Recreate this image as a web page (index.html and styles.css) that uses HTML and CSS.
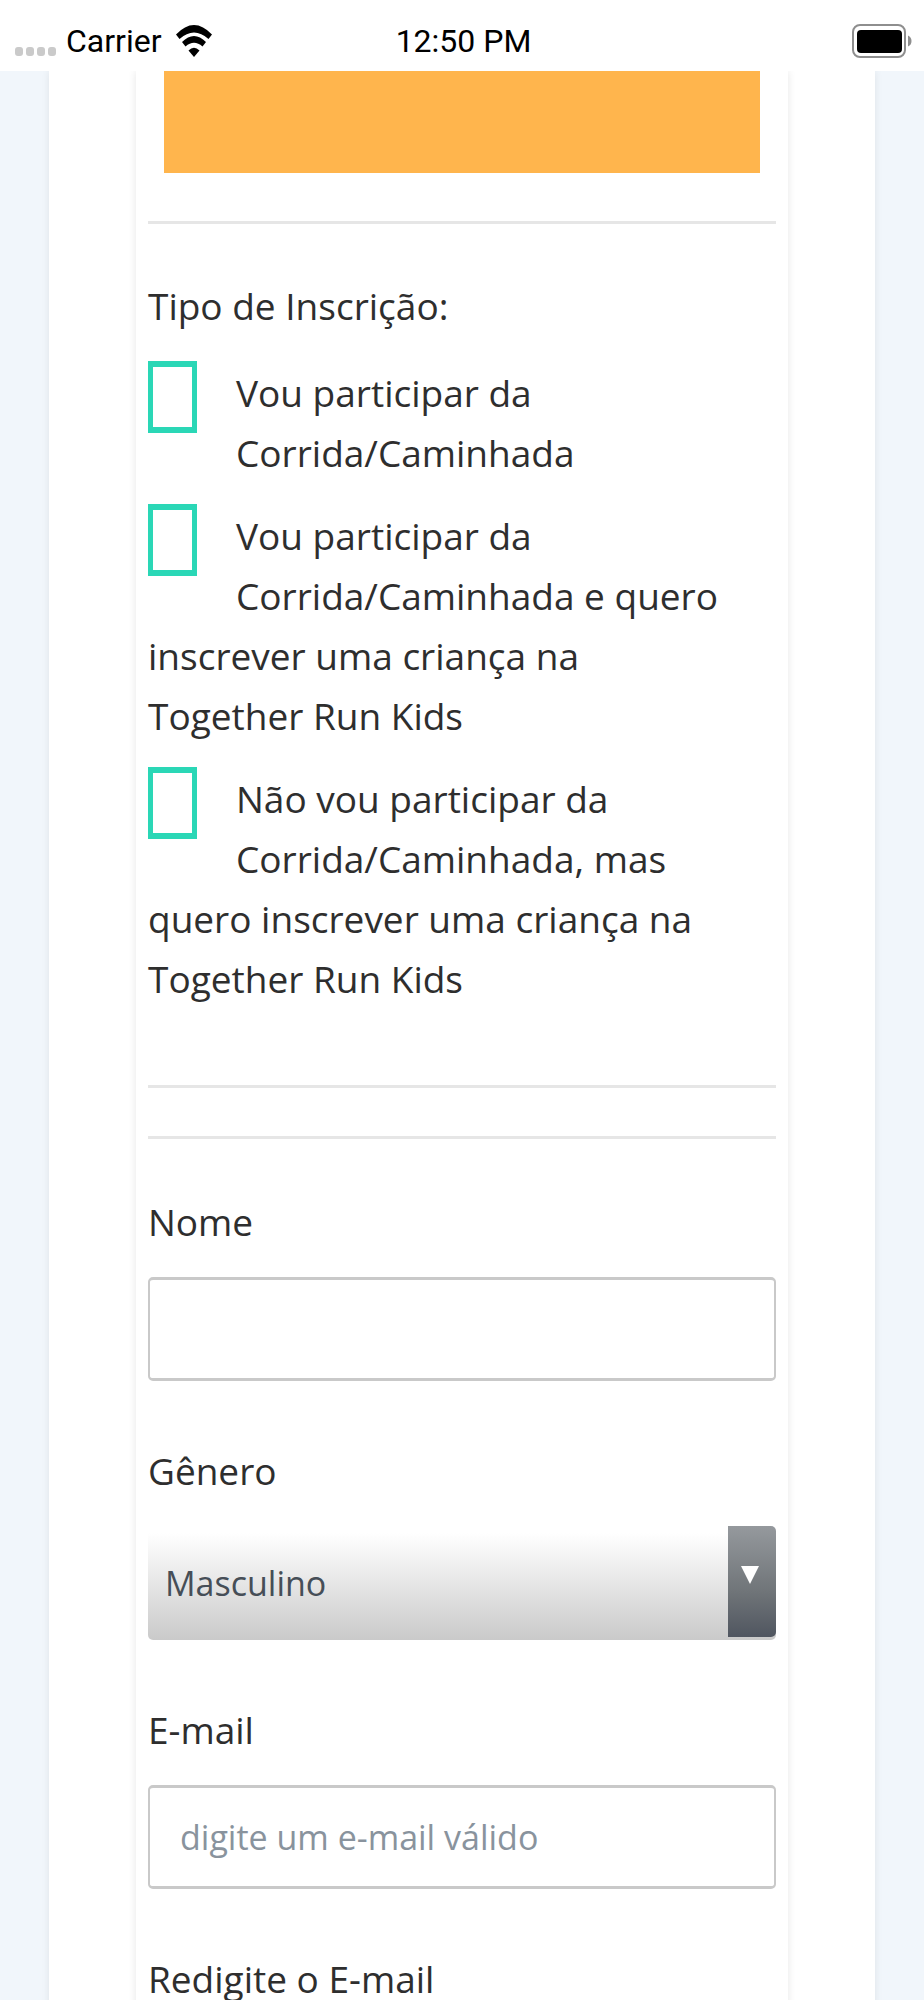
FILE: index.html
```html
<!DOCTYPE html>
<html lang="pt-br">
<head>
  <meta charset="UTF-8" />
  <meta name="viewport" content="width=device-width, initial-scale=1.0" />
  <title>Inscrição - Together Run</title>
  <link rel="stylesheet" href="styles.css">
</head>
<body>
  <!-- Barra de status -->
  <header class="status-bar">
    <div class="operadora">
      <svg class="sinal" width="42" height="9" viewBox="0 0 42 9" aria-hidden="true">
        <rect x="0" width="8" height="9" rx="3" />
        <rect x="11" width="8" height="9" rx="3" />
        <rect x="22" width="8" height="9" rx="3" />
        <rect x="33" width="8" height="9" rx="3" />
      </svg>
      <span>Carrier</span>
      <svg class="wifi" width="36" height="32" viewBox="0 0 36 32" aria-hidden="true">
        <path d="M0 9.500Q18 -9.500 36 9.500L32.500 14Q18 1 3.500 14Z" />
        <path d="M6 17Q18 5 30 17L26.500 21.500Q18 14 9.500 21.500Z" />
        <path d="M12.500 25.500Q18 20 23.500 25.500L18 32Z" />
      </svg>
    </div>
    <span class="hora">12:50 PM</span>
    <svg class="bateria" width="60" height="34" viewBox="0 0 60 34" aria-hidden="true">
      <rect x="1" y="1" width="52" height="32" rx="7" fill="none" stroke="#8e8e8e" stroke-width="2" />
      <rect x="5" y="6" width="45" height="23" rx="4" />
      <path d="M56 11.500Q59.500 13 59.500 17T56 22.500Z" fill="#8e8e8e" />
    </svg>
  </header>

  <main class="pagina">
    <div class="card">
      <form class="formulario">
        <div class="banner"></div>
        <hr class="linha" />

        <fieldset class="tipo">
          <legend>Tipo de Inscrição:</legend>
          <label class="opcao">
            <input type="checkbox" name="tipo" value="corrida" />Vou participar da Corrida/Caminhada
          </label>
          <label class="opcao">
            <input type="checkbox" name="tipo" value="corrida-kids" />Vou participar da Corrida/Caminhada e quero inscrever uma criança na Together Run Kids
          </label>
          <label class="opcao">
            <input type="checkbox" name="tipo" value="kids" />Não vou participar da Corrida/Caminhada, mas quero inscrever uma criança na Together Run Kids
          </label>
        </fieldset>

        <hr class="linha" />
        <hr class="linha" />

        <div class="campos">
          <div class="campo">
            <label for="nome">Nome</label>
            <input type="text" id="nome" />
          </div>
          <div class="campo">
            <label for="genero">Gênero</label>
            <div class="select">
              <select id="genero">
                <option>Masculino</option>
                <option>Feminino</option>
              </select>
              <span class="seta">
                <svg width="18" height="19" viewBox="0 0 18 19" aria-hidden="true">
                  <path d="M0 1H18L9 19Z" fill="#fff" />
                </svg>
              </span>
            </div>
          </div>
          <div class="campo">
            <label for="email">E-mail</label>
            <input type="email" id="email" placeholder="digite um e-mail válido" />
          </div>
          <div class="campo">
            <label for="email2">Redigite o E-mail</label>
            <input type="email" id="email2" />
          </div>
        </div>
      </form>
    </div>
  </main>
</body>
</html>
```
FILE: styles.css
```css
:root {
  --cor-fundo: #f1f6fb;
  --cor-texto: #2e2e2e;
  --cor-opcao: #2ad7b6;
  --cor-borda: #c9c9c9;
  --cor-banner: #ffb54d;
}

* {
  box-sizing: border-box;
  margin: 0;
  padding: 0;
}

body {
  display: flex;
  flex-direction: column;
  height: 100vh;
  overflow: hidden;
  background: var(--cor-fundo);
  color: var(--cor-texto);
  font-family: "Open Sans", sans-serif;
  font-size: 37px;
  line-height: 60px;
}

/* Barra de status */
.status-bar {
  display: grid;
  grid-template-columns: 1fr auto 1fr;
  align-items: center;
  height: 71px;
  padding: 10px 12px 0 15px;
  background: #fff;
  color: #000;
  font-family: Roboto, sans-serif;
  font-size: 32px;
}

.operadora {
  display: flex;
  align-items: center;
}

.sinal {
  margin: 22px 9px 0 0;
  fill: #cacaca;
}

.wifi {
  margin-left: 14px;
}

.bateria {
  justify-self: end;
}

/* Área da página */
.pagina {
  flex: 1;
  min-height: 0;
  padding: 0 49px;
  overflow: hidden;
}

.card {
  padding: 0 87px;
  background: #fff;
  box-shadow: 0 0 8px rgba(0, 0, 0, 0.08);
}

.formulario {
  padding: 0 12px;
  background: #fff;
  box-shadow: 0 0 8px rgba(0, 0, 0, 0.1);
}

.banner {
  height: 102px;
  margin: 0 16px 48px;
  background: var(--cor-banner);
}

.linha {
  height: 3px;
  border: none;
  margin-bottom: 48px;
  background: #e6e6e6;
}

/* Tipo de inscrição */
.tipo {
  border: none;
  padding: 4px 44px 76px 0;
}

.tipo legend {
  margin-bottom: 23px;
  padding-top: 4px;
}

.opcao {
  display: block;
  margin-bottom: 23px;
}

.opcao:last-child {
  margin-bottom: 0;
}

.opcao input {
  float: left;
  appearance: none;
  width: 49px;
  height: 72px;
  margin: -2px 39px 0 0;
  border: 5px solid var(--cor-opcao);
  border-width: 6px 5px;
}

/* Campos */
.campos {
  display: flex;
  flex-direction: column;
  gap: 60px;
  padding: 5px 0 60px;
}

.campo {
  display: flex;
  flex-direction: column;
  gap: 25px;
}

.campo input,
.campo select {
  width: 100%;
  font-family: inherit;
  font-size: 34px;
}

.campo input {
  height: 104px;
  padding: 0 30px;
  border: 3px solid var(--cor-borda);
  border-width: 3px 2px;
  border-radius: 5px;
  background: #fff;
}

.campo input::placeholder {
  color: #89939d;
  opacity: 1;
}

.select {
  position: relative;
  height: 114px;
}

.campo select {
  appearance: none;
  height: 100%;
  padding: 0 64px 0 17px;
  border: none;
  border-radius: 5px;
  background: linear-gradient(#fff 6%, #cacaca);
  color: #464e57;
}

/* Seta sobre o lado direito do select */
.seta {
  position: absolute;
  top: 0;
  right: 0;
  bottom: 3px;
  display: flex;
  align-items: center;
  justify-content: center;
  width: 48px;
  padding: 0 4px 14px 0;
  border-radius: 0 5px 5px 0;
  background: linear-gradient(#95999d, #6f7478 60%, #505660);
  pointer-events: none;
}
```
